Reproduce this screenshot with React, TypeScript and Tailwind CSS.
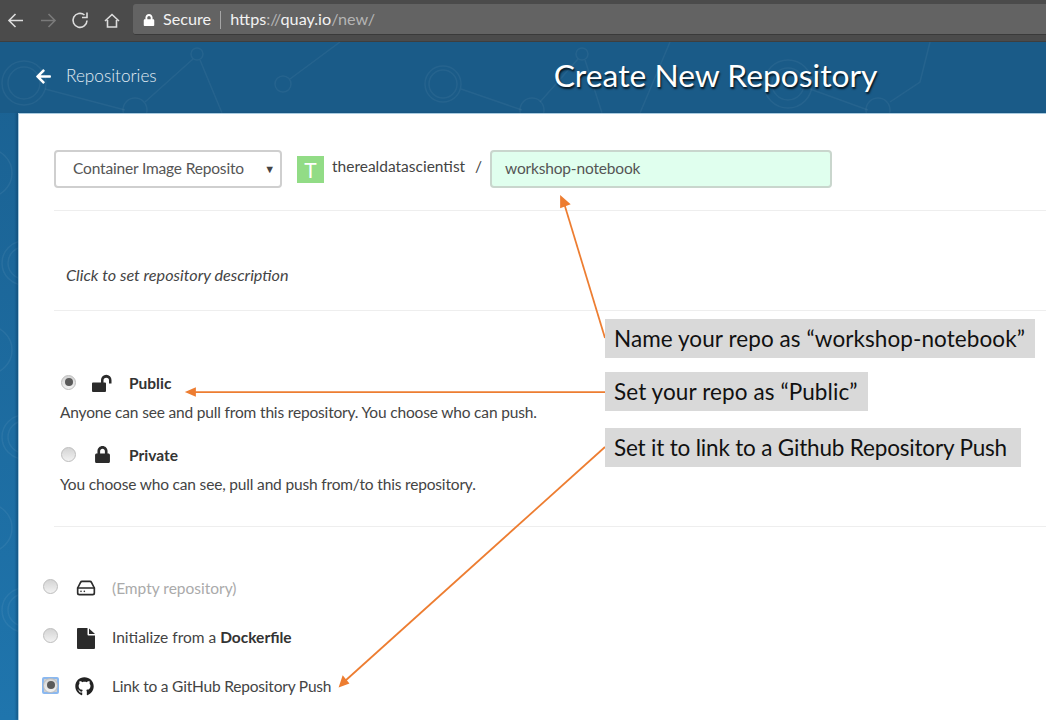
import React from "react";
import { FaGithub, FaLock, FaArrowLeft } from "react-icons/fa";
import { FiHardDrive } from "react-icons/fi";

const ui = "font-['Lato',sans-serif]";

function Radio({ checked, focus, cls = "" }: { checked?: boolean; focus?: boolean; cls?: string }) {
  const dot = (
    <span className={`flex h-[15px] w-[15px] shrink-0 items-center justify-center rounded-full border border-[#bdbdbd] bg-gradient-to-b from-[#d4d4d4] to-[#f2f2f2] ${focus ? "" : cls}`}>
      {checked && <span className="h-[8px] w-[8px] rounded-full bg-[#5a5a5a]" />}
    </span>
  );
  return focus ? <span className={`-m-px flex h-[17px] w-[17px] items-center justify-center rounded-[2px] border-2 border-[#8ab8f0] bg-[#cfcfcf] ${cls}`}>{dot}</span> : dot;
}

function Note({ children, w, mt, track }: { children: React.ReactNode; w: string; mt: string; track: string }) {
  return (
    <div className={`flex h-[39px] items-center bg-[#d9d9d9] pl-[9px] font-['Lato',sans-serif] text-[22.5px] text-[#111] whitespace-nowrap ${w} ${mt} ${track}`}>
      {children}
    </div>
  );
}

export default function App() {
  return (
    <div className={`relative h-[720px] w-[1046px] overflow-hidden bg-gradient-to-b from-[#1a5f8f] to-[#1f75ad] ${ui}`}>
      {/* faint rings on the left strip */}
      <svg className="absolute left-0 top-[113px]" width="18" height="607" fill="none" stroke="#ffffff" strokeOpacity="0.06" strokeWidth="1.500">
        <circle cx="-12" cy="60" r="24" />
        <circle cx="24" cy="150" r="22" /><circle cx="24" cy="150" r="16" />
        <circle cx="-12" cy="237" r="24" />
        <circle cx="24" cy="324" r="22" /><circle cx="24" cy="324" r="16" />
        <circle cx="-12" cy="415" r="24" />
        <circle cx="24" cy="497" r="22" /><circle cx="24" cy="497" r="16" />
      </svg>

      {/* browser toolbar */}
      <div className="relative flex h-[42px] items-start border-b border-[#3e3e3e] bg-[#4b4b4b] pt-[4px]">
        <div className="flex h-[31px] w-[133px] shrink-0 items-center text-[#ddd]">
          <svg width="133" height="31" viewBox="0 0 133 31" fill="none" stroke="currentColor" strokeWidth="1.6">
            <path d="M23 16.500H9M15.500 10L9 16.500L15.500 23" />
            <path d="M55 16.500H41M48.500 10L55 16.500L48.500 23" stroke="#7a7a7a" />
            <path d="M87 16.500A7 7 0 1 1 84.500 11" />
            <path d="M87 8.500V13.500H82" />
            <path d="M105 17L112 10.500L119 17M107.500 16V23H116.500V16" />
          </svg>
        </div>
        <div className="flex h-[31px] flex-1 items-center rounded-l-[3px] border-b border-[#3a3a3a] bg-[#636363] pl-[10px] pt-[1px] text-[16.2px] text-[#f2f2f2]">
          <FaLock className="mr-[8px] h-[12px] w-[12px] text-white" />
          <span>Secure</span>
          <span className="mx-[9px] h-[18px] w-px bg-[#a5a5a5]" />
          <span>https<span className="text-[#b5b5b5]">://</span>quay.io<span className="text-[#b5b5b5]">/new/</span></span>
        </div>
      </div>

      {/* blue header */}
      <div className="relative flex h-[71px] items-center bg-[#1a5b88]">
        <svg className="absolute inset-0" width="1046" height="71" fill="none" stroke="#ffffff" strokeOpacity="0.05" strokeWidth="1.500">
          <circle cx="24" cy="41" r="22" /><circle cx="24" cy="41" r="16" />
          <circle cx="197" cy="12" r="6" /><circle cx="135" cy="68" r="12" /><circle cx="283" cy="42" r="8" />
          <path d="M45 47L125 68M145 60L193 17M200 18L222 71M290 37L340 0" />
          <circle cx="443" cy="42" r="18" /><circle cx="443" cy="42" r="14" /><circle cx="582" cy="12" r="6" /><circle cx="532" cy="68" r="12" />
          <path d="M461 47L522 68M540 60L578 17M585 18L602 71M670 0L640 71" />
          <circle cx="788" cy="42" r="24" /><circle cx="788" cy="42" r="16" /><circle cx="878" cy="68" r="12" />
          <path d="M810 47L868 68M890 60L920 40L930 0" />
        </svg>
        <FaArrowLeft className="relative -top-[1px] ml-[35px] h-[17px] w-[17px] text-white" />
        <span className="relative -top-[2px] ml-[14px] text-[17.2px] font-light text-[#e2ecf3]">Repositories</span>
        <h1 className="relative -top-[2px] ml-[397px] text-[31.8px] font-normal leading-none text-white [text-shadow:1px_2px_2px_rgba(0,0,0,0.8)]">Create New Repository</h1>
      </div>

      {/* white panel */}
      <div className="relative ml-[18px] h-[607px] border-l border-t border-[#a9cbe0] bg-white pl-[35px] text-[15.5px] text-[#444] shadow-[-2px_0_2px_rgba(10,50,80,0.35)]">
        <div className="flex h-[97px] items-start border-b border-[#eeeeee] pt-[36px]">
          <div className="flex h-[38px] w-[228px] items-center justify-between rounded-[4px] border-2 border-[#cfcfcf] pl-[17px] pr-[5px] tracking-[-0.17px] text-[#555]">
            <span>Container Image Reposito</span>
            <span className="text-[11px] text-[#444]">▼</span>
          </div>
          <span className="ml-[15px] mt-[6px] flex h-[27px] w-[27px] items-center justify-center bg-[#92dc86] text-[21px] text-white">T</span>
          <span className="ml-[8px] mt-[5px] w-[143px] text-[#444]">therealdatascientist</span>
          <span className="mt-[5px] w-[15px]">/</span>
          <div className="flex h-[38px] w-[342px] items-center rounded-[4px] border-2 border-[#c9d6cd] bg-[#e0ffee] pl-[13px] tracking-[-0.17px] text-[#555]">workshop-notebook</div>
        </div>
        <div className="flex h-[100px] items-start border-b border-[#eeeeee] pl-[12px] pt-[52px] text-[16.2px] italic leading-[23px] text-[#444]">Click to set repository description</div>

        <div className="flex h-[216px] flex-col border-b border-[#eeeeee] pl-[6px] pt-[60px]">
          <div className="flex h-[24px] items-center">
            <Radio checked cls="relative -top-[1px] left-[1px]" />
            <svg className="ml-[17px] h-[20px] w-[21px] text-[#2b2b2b]" viewBox="0 0 21 20" fill="currentColor">
              <path d="M1 9.500H9V7A5 5 0 0 1 19.500 7V10.500H17V7.500A2.700 2.700 0 0 0 11.500 7.500V9.500H13A1 1 0 0 1 14 10.500V18A1 1 0 0 1 13 19H1A1 1 0 0 1 0 18V10.500A1 1 0 0 1 1 9.500Z" />
            </svg>
            <span className="relative top-[1px] ml-[16px] font-bold text-[#333]">Public</span>
          </div>
          <div className="mt-[6px] tracking-[-0.17px]">Anyone can see and pull from this repository. You choose who can push.</div>
          <div className="mt-[18px] flex h-[24px] items-center">
            <Radio cls="relative left-[1px]" />
            <FaLock className="ml-[19px] h-[17px] w-[17px] text-[#2b2b2b]" />
            <span className="relative top-[1px] ml-[18px] font-bold text-[#333]">Private</span>
          </div>
          <div className="mt-[7px] tracking-[-0.17px]">You choose who can see, pull and push from/to this repository.</div>
        </div>

        <div className="-ml-[11px] flex flex-col pt-[48px]">
          <div className="flex h-[24px] items-center">
            <Radio cls="relative -top-[1px]" />
            <FiHardDrive className="relative top-[1px] ml-[18px] h-[20px] w-[20px] text-[#2b2b2b]" />
            <span className="relative top-[2px] ml-[16px] text-[#aaa]">(Empty repository)</span>
          </div>
          <div className="mt-[25px] flex h-[24px] items-center">
            <Radio cls="relative -top-[1px]" />
            <svg className="relative top-[2px] ml-[19px] h-[21px] w-[18px] text-[#2b2b2b]" viewBox="0 0 18 21" fill="currentColor">
              <path d="M1 0H10.500V6.500A1 1 0 0 0 11.500 7.500H18V20A1 1 0 0 1 17 21H1A1 1 0 0 1 0 20V1A1 1 0 0 1 1 0Z" />
              <path d="M12 0.500L18 6H12Z" />
            </svg>
            <span className="relative top-[2px] ml-[17px] text-[#444]">Initialize from a <b className="text-[#333]">Dockerfile</b></span>
          </div>
          <div className="mt-[25px] flex h-[24px] items-center">
            <Radio checked focus />
            <FaGithub className="relative top-[1px] ml-[17px] h-[19px] w-[19px] text-[#222]" />
            <span className="relative top-[2px] ml-[18px] tracking-[-0.2px] text-[#444]">Link to a GitHub Repository Push</span>
          </div>
        </div>
      </div>

      {/* annotations */}
      <svg className="absolute left-0 top-0" width="1046" height="720" fill="none" stroke="#ed7d31" strokeWidth="1.750">
        <path d="M605 338L564 203" />
        <path d="M561 197L569 204L561 207Z" fill="#ed7d31" />
        <path d="M605 392H193" />
        <path d="M187 392L195 388.500V395.500Z" fill="#ed7d31" />
        <path d="M605 447L345 681" />
        <path d="M340 686L343 677L348 683Z" fill="#ed7d31" />
      </svg>
      <div className="absolute left-[605px] top-[319px] flex flex-col">
        <Note w="w-[430px]" mt="" track="tracking-[0.08px]">Name your repo as “workshop-notebook”</Note>
        <Note w="w-[263px]" mt="mt-[14px]" track="tracking-[0.1px]">Set your repo as “Public”</Note>
        <Note w="w-[416px]" mt="mt-[17px]" track="tracking-[-0.18px]">Set it to link to a Github Repository Push</Note>
      </div>
    </div>
  );
}
